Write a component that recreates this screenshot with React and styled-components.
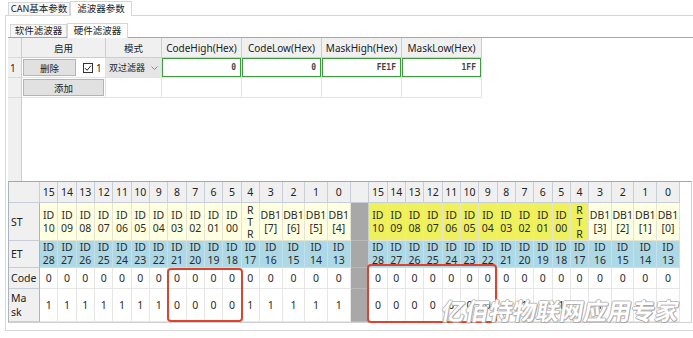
import React from 'react';
import styled, { createGlobalStyle } from 'styled-components';

const Global = createGlobalStyle`
  html, body { margin: 0; padding: 0; background: #fff; }
  body { font-family: "Noto Sans", "Noto Sans CJK SC", sans-serif; color: #1e1e1e; }
`;

const Screen = styled.div`
  position: relative;
  width: 693px;
  height: 338px;
  overflow: hidden;
  background: #fff;
`;

const TabStrip = styled.div`
  display: flex;
  align-items: flex-end;
  height: ${p => p.$h}px;
  padding-left: ${p => p.$indent}px;
  box-sizing: border-box;
`;

const Tab = styled.div`
  width: ${p => p.$w}px;
  height: ${p => (p.$active ? 15 : 13)}px;
  box-sizing: border-box;
  border: 1px solid #d6d6d6;
  border-bottom: none;
  background: ${p => (p.$active ? '#fff' : '#f7f7f7')};
  font-family: "Noto Sans CJK SC", sans-serif;
  font-size: 9.5px;
  line-height: ${p => (p.$active ? 13 : 11)}px;
  text-align: center;
  color: #222;
  margin-bottom: ${p => (p.$active ? -1 : 0)}px;
  position: relative;
`;

const Panel = styled.div`
  margin-left: 5px;
  height: 316px;
  box-sizing: border-box;
  border-top: 1px solid #d6d6d6;
  border-left: 1px solid #d6d6d6;
  border-bottom: 1px solid #d6d6d6;
  display: flex;
  flex-direction: column;
`;

const UpperTable = styled.div`
  margin-left: 2px;
  height: 144px;
  box-sizing: border-box;
  border-top: 1px solid #a6a6a6;
  display: grid;
  grid-template-columns: 14px 84px 56px 80px 80px 80px 80px 1fr;
  grid-template-rows: 20px 20px 20px 1fr;
`;

const HeadCell = styled.div`
  background: #f0f0f0;
  border-right: 1px solid #c6ced8;
  border-bottom: 1px solid #c6ced8;
  box-sizing: border-box;
  display: flex;
  align-items: center;
  justify-content: center;
  font-family: ${p => (p.$cjk ? '"Noto Sans CJK SC", sans-serif' : '"Noto Sans", sans-serif')};
  font-size: ${p => (p.$cjk ? 9.5 : 10)}px;
  color: #222;
`;

const RowHead = styled.div`
  background: #f0f0f0;
  border-right: 1px solid #c6ced8;
  border-bottom: ${p => (p.$last ? 'none' : '1px solid #d6dbe2')};
  box-sizing: border-box;
  font-size: 10px;
  padding-left: 2px;
  display: flex;
  align-items: center;
`;

const DataCell = styled.div`
  border-right: 1px solid #e3e3e3;
  border-bottom: 1px solid #e3e3e3;
  box-sizing: border-box;
  display: flex;
  align-items: center;
  background: ${p => p.$bg || '#fff'};
  padding: 0 1px;
`;

const Blank = styled.div``;

const ValueCell = styled.div`
  box-sizing: border-box;
  border-right: 1px solid #e3e3e3;
  border-bottom: 1px solid #e3e3e3;
  box-shadow: inset 0 0 0 1px #3f9a3f;
  display: flex;
  align-items: center;
  justify-content: flex-end;
  padding-right: 5px;
  font-family: "DejaVu Sans Mono", monospace;
  font-weight: bold;
  font-size: 8px;
  color: #444;
`;

const Button = styled.div`
  height: 17px;
  width: ${p => p.$w}px;
  box-sizing: border-box;
  background: #e1e1e1;
  border: 1px solid #b4b4b4;
  display: flex;
  align-items: center;
  justify-content: center;
  font-family: "Noto Sans CJK SC", sans-serif;
  font-size: 9.5px;
  color: #222;
`;

const CheckWrap = styled.div`
  display: flex;
  align-items: center;
  gap: 3px;
  margin-left: 7px;
  font-size: 10px;
`;

const Box = styled.div`
  width: 10px;
  height: 10px;
  box-sizing: border-box;
  border: 1px solid #333;
  display: flex;
  align-items: center;
  justify-content: center;
`;

const Combo = styled.div`
  flex: 1;
  align-self: stretch;
  display: flex;
  align-items: center;
  gap: 6px;
  background: #e6e6e6;
  padding: 0 0 0 3px;
  margin: 0 -1px;
  font-family: "Noto Sans CJK SC", sans-serif;
  font-size: 9px;
  color: #222;
`;

const Chevron = styled.svg`
  width: 7px;
  height: 4px;
`;

const LowerTable = styled.div`
  margin-left: 2px;
  width: 684px;
  height: 142px;
  box-sizing: border-box;
  border-top: 1px solid #a6a6a6;
  border-left: 1px solid #aab5c3;
  border-right: 1px solid #d0d0d0;
  border-bottom: 1px solid #d0d0d0;
  display: grid;
  grid-template-columns: 31px repeat(12, 18.33px) repeat(4, 22.67px) 18.67px repeat(12, 18.33px) repeat(4, 22.67px) 1fr;
  grid-template-rows: 21px 38px 27px 21px 33px;
`;

const BitHead = styled.div`
  background: #f0f0f0;
  border-right: 1px solid #c6ced8;
  border-bottom: 1px solid #c6ced8;
  box-sizing: border-box;
  display: flex;
  align-items: center;
  justify-content: center;
  font-size: 10.5px;
  color: #222;
`;

const Label = styled.div`
  background: #f0f0f0;
  border-right: 1px solid #a9b6c6;
  border-bottom: 1px solid #c6ced8;
  box-sizing: border-box;
  display: flex;
  align-items: center;
  padding-left: 2px;
  font-size: 10.5px;
  line-height: 14px;
  white-space: pre-line;
  color: #222;
`;

const Bit = styled.div`
  background: ${p => p.$bg};
  border-right: 1px solid ${p => p.$line};
  border-bottom: 1px solid ${p => p.$line};
  box-sizing: border-box;
  display: flex;
  align-items: center;
  justify-content: center;
  text-align: center;
  white-space: pre-line;
  font-size: 10.5px;
  line-height: ${p => (p.$tight ? 12 : 13)}px;
  color: #2a2a2a;
`;

const Sep = styled.div`
  background: ${p => (p.$head ? '#f0f0f0' : '#a8a8a8')};
  border-right: 1px solid #c6ced8;
  border-bottom: 1px solid ${p => (p.$head ? '#c6ced8' : '#b8b8b8')};
  box-sizing: border-box;
`;

const Mark = styled.div`
  position: absolute;
  left: ${p => p.$x}px;
  top: ${p => p.$y}px;
  width: ${p => p.$w}px;
  height: ${p => p.$h}px;
  box-sizing: border-box;
  border: 2px solid #e2412c;
  border-radius: 4px;
  pointer-events: none;
`;

const Watermark = styled.div`
  position: absolute;
  left: 442px;
  top: 296px;
  font-family: "Noto Sans CJK SC", sans-serif;
  font-weight: bold;
  font-size: 23.5px;
  line-height: 28px;
  color: #fff;
  letter-spacing: 0.2px;
  transform: skewX(-10deg);
  text-shadow: -1px 0 #b4b4b4, 1px 0 #a8a8a8, 0 -1px #c0c0c0, 0 1px #a8a8a8, 1px 1px #b0b0b0;
  pointer-events: none;
`;

const pad = n => String(n).padStart(2, '0');
const bits = Array.from({ length: 16 }, (_, i) => 15 - i);

function stCell(g, b) {
  if (b >= 5) return { text: `ID\n${pad(b - 5)}`, bg: g === 1 ? '#eef05c' : '#ffffe1' };
  if (b === 4) return { text: 'R\nT\nR', bg: g === 1 ? '#eef05c' : '#ffffe1', tight: true };
  return { text: `DB1\n[${b + (g === 0 ? 4 : 0)}]`, bg: '#ffffe1' };
}

function maskVal(g, b) {
  if (g === 0) return b >= 9 || b <= 4 ? '1' : '0';
  return b >= 9 ? '0' : '1';
}

const rows = [
  { key: 'st', label: 'ST' },
  { key: 'et', label: 'ET' },
  { key: 'code', label: 'Code' },
  { key: 'mask', label: 'Ma\nsk' },
];

function BitCell({ row, g, b }) {
  if (row === 'st') {
    const c = stCell(g, b);
    return <Bit $bg={c.bg} $line="#e4e4d0" $tight={c.tight}>{c.text}</Bit>;
  }
  if (row === 'et') return <Bit $bg="#add8e6" $line="#c7dfe8">{`ID\n${b + 13}`}</Bit>;
  if (row === 'code') return <Bit $bg="#fff" $line="#e6e6e6">0</Bit>;
  return <Bit $bg="#fff" $line="#e6e6e6">{maskVal(g, b)}</Bit>;
}

function Group({ row, g }) {
  return bits.map(b =>
    row === 'head' ? <BitHead key={`${g}-${b}`}>{b}</BitHead> : <BitCell key={`${g}-${b}`} row={row} g={g} b={b} />
  );
}

export default function App() {
  return (
    <Screen>
      <Global />
      <TabStrip $h={15} $indent={8}>
        <Tab $w={62}>CAN基本参数</Tab>
        <Tab $w={62} $active>滤波器参数</Tab>
      </TabStrip>
      <Panel>
        <TabStrip $h={21} $indent={4}>
          <Tab $w={57}>软件滤波器</Tab>
          <Tab $w={61} $active>硬件滤波器</Tab>
        </TabStrip>
        <UpperTable>
          <RowHead />
          <HeadCell $cjk>启用</HeadCell>
          <HeadCell $cjk>模式</HeadCell>
          <HeadCell>CodeHigh(Hex)</HeadCell>
          <HeadCell>CodeLow(Hex)</HeadCell>
          <HeadCell>MaskHigh(Hex)</HeadCell>
          <HeadCell>MaskLow(Hex)</HeadCell>
          <Blank />

          <RowHead>1</RowHead>
          <DataCell>
            <Button $w={53}>删除</Button>
            <CheckWrap>
              <Box>
                <svg width="8" height="8" viewBox="0 0 8 8">
                  <path d="M1 4.2 L3.1 6.3 L7 1.6" fill="none" stroke="#222" strokeWidth="1" />
                </svg>
              </Box>
              1
            </CheckWrap>
          </DataCell>
          <DataCell>
            <Combo>
              双过滤器
              <Chevron viewBox="0 0 7 4">
                <path d="M0.5 0.5 L3.5 3.5 L6.5 0.5" fill="none" stroke="#888" strokeWidth="1" />
              </Chevron>
            </Combo>
          </DataCell>
          <ValueCell>0</ValueCell>
          <ValueCell>0</ValueCell>
          <ValueCell>FE1F</ValueCell>
          <ValueCell>1FF</ValueCell>
          <Blank />

          <RowHead />
          <DataCell>
            <Button $w={82}>添加</Button>
          </DataCell>
          <DataCell />
          <DataCell />
          <DataCell />
          <DataCell />
          <DataCell />
          <Blank />

          <RowHead $last />
        </UpperTable>

        <LowerTable>
          <BitHead />
          <Group row="head" g={0} />
          <Sep $head />
          <Group row="head" g={1} />
          <Blank />
          {rows.map(r => (
            <React.Fragment key={r.key}>
              <Label>{r.label}</Label>
              <Group row={r.key} g={0} />
              <Sep />
              <Group row={r.key} g={1} />
              <Blank />
            </React.Fragment>
          ))}
        </LowerTable>
      </Panel>

      <Mark $x={167} $y={268} $w={76} $h={54} />
      <Mark $x={367} $y={264} $w={130} $h={59} />
      <Watermark>亿佰特物联网应用专家</Watermark>
    </Screen>
  );
}
